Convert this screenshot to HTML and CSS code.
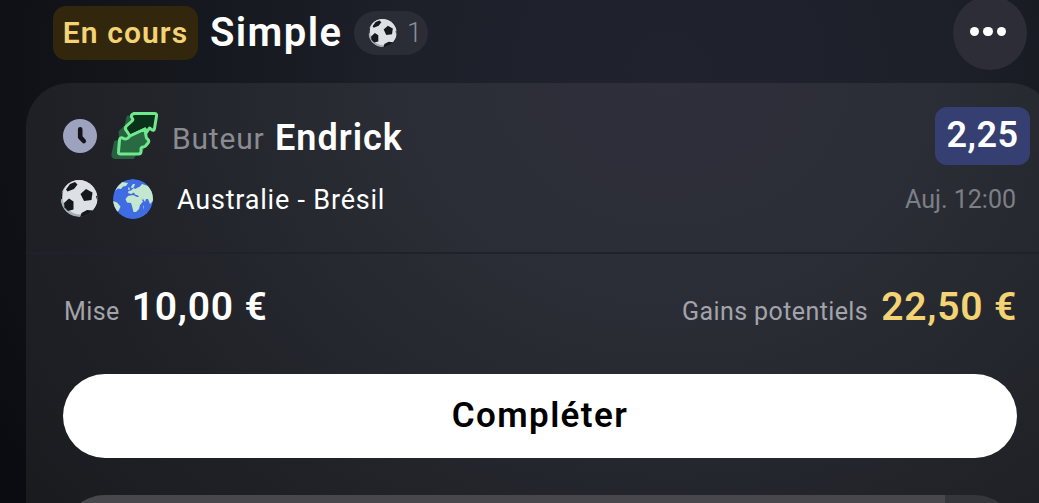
FILE: index.html
```html
<!DOCTYPE html>
<html lang="fr">
<head>
<meta charset="utf-8">
<title>Pari simple</title>
<link rel="stylesheet" href="styles.css">
</head>
<body>
<svg class="defs" aria-hidden="true">
  <symbol id="ball" viewBox="0 0 38 38">
    <clipPath id="ballClip"><circle cx="19" cy="19" r="18.5"/></clipPath>
    <g clip-path="url(#ballClip)">
      <circle cx="19" cy="19" r="18.5" fill="#a3acb2"/>
      <circle cx="20.500" cy="17" r="18" fill="#dde1e5"/>
      <path d="M6 10 10 4.500 15 2.500 17.500 5 14 9.500 7.500 12Z" fill="#15191c"/>
      <path d="M20.500 14.500 26 9.500 32.500 13 31.500 20.500 24 21.500Z" fill="#15191c"/>
      <path d="M4 23.500 9 19 13.500 22 13.500 30 8 31.500 4.500 28Z" fill="#15191c"/>
      <path d="M0 14 2.500 12 2 19 0 21Z" fill="#15191c"/>
      <path d="M20 38 21.500 33.500 27 30.500 33 31 31 36Z" fill="#15191c"/>
      <path d="M36 17 38 15 38 23Z" fill="#15191c"/>
    </g>
  </symbol>
</svg>
<main class="screen">
  <header class="top">
    <span class="status">En cours</span>
    <h1 class="title">Simple</h1>
    <span class="count"><svg class="count-ball"><use href="#ball"/></svg><span class="count-num">1</span></span>
    <button class="more" aria-label="Options"><i></i><i></i><i></i></button>
  </header>
  <section class="card">
    <div class="pick">
      <svg class="clock" viewBox="0 0 34 34"><circle cx="17" cy="17" r="17" fill="#9da3bf"/><path d="M17.200 10.200V18.200L20.800 22" fill="none" stroke="#14151a" stroke-width="4.600" stroke-linecap="round" stroke-linejoin="round"/></svg>
      <svg class="swap" viewBox="0 0 54 54">
        <path d="M20 9 40 12 34 42 28 44 25 49.500H7Q4.500 49.500 5 46L7.500 34 13 34 12 24 18 18Z" fill="#286040" stroke="#286040" stroke-width="3" stroke-linejoin="round"/>
        <path d="M26 5.500H46.500Q49 5.500 48.500 8L46.500 20.500Q46 23.500 43.500 21.500L41.500 20 38.500 24.500 37 21 22 28 18 22Q16.500 20 18.500 18L24 13Q25.500 11.500 24 10 22 7 26 5.500Z" fill="#0a3119" stroke="#6fe88e" stroke-width="3" stroke-linejoin="round"/>
        <path d="M37 21 38 28Q38 30 40 31.500 41.500 33 40 35L37.500 38Q36.500 39 35 39 32.500 39.500 33 41.500V43.500Q33 46 30.500 46H12.500Q10 46 10.500 43.500L11.500 32Q12 29 14.500 30 18 32 20 30L22 28Z" fill="#286b43" stroke="#6fe88e" stroke-width="3" stroke-linejoin="round"/>
      </svg>
      <span class="market">Buteur</span>
      <span class="player">Endrick</span>
      <span class="odds">2,25</span>
    </div>
    <div class="match">
      <svg class="ball"><use href="#ball"/></svg>
      <svg class="globe" viewBox="0 0 40 40">
        <clipPath id="globeClip"><circle cx="20" cy="20" r="20"/></clipPath>
        <g clip-path="url(#globeClip)">
          <circle cx="20" cy="20" r="20" fill="#3f6ce2"/>
          <g fill="#c3e8cf">
            <path d="M5 7 9 3 15 4 13 7 10 7.500 8 10 5 9.500 2 12Z"/>
            <path d="M0 22 4 23.500 7.500 27.500 6 31 3.500 34 0 30Z"/>
            <path d="M15 17 20 16 24 18 27 18 30 22.500 27 26 26 30 23 33 20.500 33 19 27 18 24 14 23.500 12.500 20Z"/>
            <path d="M15 14 15.500 12 18 11.500 21 9 22 10 27 7.500 29 5 35 7 40 14 40 22 37 25 35 20 33 20 32 23 29.500 19 30 21 27 20 25 16.500 22 15.500 21 13.500 18 15Z"/>
            <path d="M18 8 20 5 22 5 21 8 19 9.500Z"/><path d="M15 9.500 16 8 17 10.500 15.500 11Z"/><path d="M30 28 31 26 30 31Z"/>
          </g>
        </g>
      </svg>
      <span class="teams">Australie - Brésil</span>
      <time class="when">Auj. 12:00</time>
    </div>
    <div class="amounts">
      <span class="label mise">Mise</span><span class="value stake">10,00 €</span>
      <span class="label gains">Gains potentiels</span><span class="value win">22,50 €</span>
    </div>
    <button class="complete">Compléter</button>
    <div class="progress"><div class="progress-fill"></div></div>
  </section>
</main>
</body>
</html>
```
FILE: styles.css
```css
* { box-sizing: border-box; }
body { margin: 0; font-family: Roboto, "Liberation Sans", sans-serif; background: #0d0e13; overflow: hidden; }
button { border: 0; padding: 0; font: inherit; }
svg { display: block; flex: none; }
.defs { width: 0; height: 0; position: absolute; }
.screen {
  width: 1039px; height: 503px; overflow: hidden;
  background: radial-gradient(ellipse 800px 700px at 670px 70px, #20222d 0%, #1d1f29 35%, #14161c 66%, #0b0c11 100%);
}
.top { height: 83px; display: flex; align-items: flex-start; padding: 0 12px 0 53px; white-space: nowrap; }
.status { width: 145px; height: 54px; margin-top: 6px; border-radius: 13px; background: #32270c; color: #f3d374; font-size: 30px; line-height: 54px; font-weight: 600; text-align: center; letter-spacing: 1.1px; }
.title { margin: 9px 0 0 12px; width: 132px; color: #fff; font-size: 40px; line-height: 48px; font-weight: 600; letter-spacing: 1.4px; }
.count { margin: 11px 0 0 12px; width: 74px; height: 44px; border-radius: 22px; background: #2a2c36; display: flex; align-items: center; padding-left: 14px; }
.count-ball { width: 29px; height: 30px; }
.count-num { margin-left: 10px; color: #8b8d96; font-size: 27px; font-weight: 300; line-height: 42px; }
.more { width: 74px; height: 74px; margin: -4px 0 0 auto; border-radius: 50%; background: #2c2d37; display: flex; align-items: center; justify-content: center; gap: 4px; padding: 0 4px 3px 0; }
.more i { width: 9.5px; height: 9.5px; border-radius: 50%; background: #fff; }
.card { width: 1028px; height: 500px; margin-left: 26px; border-radius: 44px; background: #ffffff10; color: #fff; white-space: nowrap; }
.pick { height: 86px; display: flex; align-items: flex-start; padding: 24px 24px 0 37px; }
.clock { width: 34px; height: 34px; margin-top: 12px; }
.swap { width: 54px; height: 54px; margin: 1px 0 0 11px; }
.market { margin: 12px 0 0 10px; width: 102px; font-size: 30px; line-height: 40px; color: #8b8c91; letter-spacing: .8px; font-weight: 400; }
.player { margin: 11px 0 0 1px; font-size: 36px; line-height: 40px; font-weight: 600; letter-spacing: 1px; }
.odds { margin-left: auto; width: 95px; height: 58px; border-radius: 12px; background: #363f71; font-size: 36px; line-height: 56px; text-align: center; font-weight: 600; letter-spacing: .4px; }
.match { height: 83px; display: flex; align-items: flex-start; padding: 10px 38px 0 34px; }
.ball { width: 38px; height: 39px; }
.globe { width: 40px; height: 40px; margin-left: 15px; }
.teams { margin: 4px 0 0 24px; font-size: 27px; line-height: 34px; letter-spacing: .8px; }
.when { margin: 4px 0 0 auto; font-size: 25px; line-height: 34px; color: #7d7f87; letter-spacing: 0; }
.amounts { height: 122px; border-top: 2px solid #1f212b; display: flex; align-items: baseline; padding: 30px 37px 0 38px; }
.label { font-size: 25px; color: #a2a4aa; letter-spacing: .4px; }
.value { font-size: 39px; line-height: 46px; font-weight: 600; letter-spacing: .8px; }
.stake { margin-left: 12px; }
.gains { margin-left: auto; }
.win { margin-left: 13px; color: #f3d374; }
.complete { display: block; width: 954px; height: 84px; margin-left: 37px; border-radius: 42px; background: #fff; color: #000; font-size: 35px; line-height: 84px; font-weight: 600; letter-spacing: 1.4px; }
.progress { width: 954px; height: 84px; margin: 37px 0 0 37px; border-radius: 42px; background: #35363b; overflow: hidden; }
.progress-fill { width: 882px; height: 100%; background: #47474c; }
```
